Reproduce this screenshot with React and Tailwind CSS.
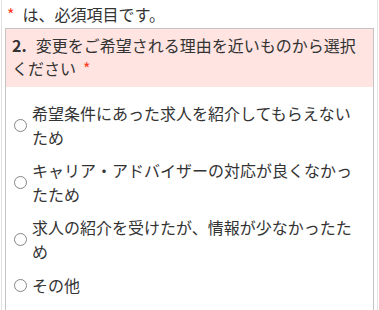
import React, { useState } from 'react';

const reasons = [
    '希望条件にあった求人を紹介してもらえないため',
    'キャリア・アドバイザーの対応が良くなかったため',
    '求人の紹介を受けたが、情報が少なかったため',
    'その他',
];

function RadioOption({ label, checked, onSelect }) {
    return (
        <label className="flex items-center py-[5px] cursor-pointer" onClick={onSelect}>
            <span className="flex-none w-[13px] h-[13px] rounded-full border border-[#858585] bg-white flex items-center justify-center">
                {checked && <span className="w-[7px] h-[7px] rounded-full bg-[#0075ff]"></span>}
            </span>
            <span className="ml-[5px] w-[328px] leading-[23.6px]">{label}</span>
        </label>
    );
}

export default function App() {
    const [selected, setSelected] = useState(null);

    return (
        <div className="w-[379px] h-[310px] overflow-hidden bg-white text-[16px] text-[#333] font-['Noto_Sans_CJK_JP','Noto_Sans',sans-serif]">
            <div className="ml-[1px] w-[377px] h-full border-x border-[#e2e2e2] px-[3px]">
                {/* required note */}
                <p className="pl-[2px] pt-[3px] pb-[3px] leading-[22px]">
                    <span className="text-[#ff3b1f] mr-[8px]">*</span>は、必須項目です。
                </p>

                {/* question box */}
                <div className="border border-[#c4c4c4] h-[300px]">
                    <div className="bg-[#ffe4e1] px-[6px] pt-[5px] pb-[8px] leading-[22.5px]">
                        <span className="font-bold mr-[9px]">2.</span>
                        変更をご希望される理由を近いものから選択ください<span className="text-[#ff3b1f] ml-[7px]">*</span>
                    </div>

                    <div className="pl-[8px] pt-[10px]">
                        {reasons.map((r, i) => (
                            <RadioOption
                                key={i}
                                label={r}
                                checked={selected === i}
                                onSelect={() => setSelected(i)}
                            />
                        ))}
                    </div>
                </div>
            </div>
        </div>
    );
}
